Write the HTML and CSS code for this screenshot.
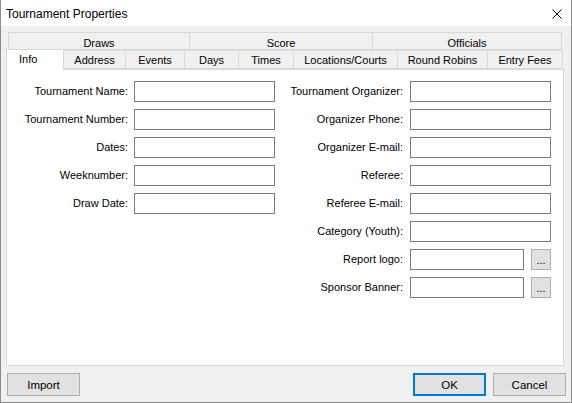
FILE: index.html
```html
<!DOCTYPE html>
<html lang="en">
<head>
  <meta charset="UTF-8" />
  <title>Tournament Properties</title>
  <link rel="stylesheet" href="styles.css">
</head>
<body>
  <div class="dialog">
    <div class="titlebar">
      <span class="title">Tournament Properties</span>
      <svg class="close" width="10" height="10" viewBox="0 0 10 10">
        <path d="M0.5 0.5 L9.5 9.5 M9.5 0.5 L0.5 9.5" stroke="#000" stroke-width="1" fill="none"/>
      </svg>
    </div>

    <div class="tabs">
      <div class="tabrow back">
        <div class="tab" style="width: 182px">Draws</div>
        <div class="tab" style="width: 183px">Score</div>
        <div class="tab" style="width: 189px">Officials</div>
      </div>
      <div class="tabrow front">
        <div class="tab selected" style="width: 58px">Info</div>
        <div class="tab" style="width: 62px">Address</div>
        <div class="tab" style="width: 59px">Events</div>
        <div class="tab" style="width: 54px">Days</div>
        <div class="tab" style="width: 55px">Times</div>
        <div class="tab" style="width: 104px">Locations/Courts</div>
        <div class="tab" style="width: 90px">Round Robins</div>
        <div class="tab" style="width: 75px">Entry Fees</div>
      </div>

      <div class="panel">
        <div class="col left">
          <label>Tournament Name:</label><input type="text">
          <label>Tournament Number:</label><input type="text">
          <label>Dates:</label><input type="text">
          <label>Weeknumber:</label><input type="text">
          <label>Draw Date:</label><input type="text">
        </div>
        <div class="col right">
          <label>Tournament Organizer:</label><input type="text">
          <label>Organizer Phone:</label><input type="text">
          <label>Organizer E-mail:</label><input type="text">
          <label>Referee:</label><input type="text">
          <label>Referee E-mail:</label><input type="text">
          <label>Category (Youth):</label><input type="text">
          <label>Report logo:</label>
          <div class="browse"><input type="text"><button>...</button></div>
          <label>Sponsor Banner:</label>
          <div class="browse"><input type="text"><button>...</button></div>
        </div>
      </div>
    </div>

    <div class="footer">
      <button class="btn">Import</button>
      <span class="spacer"></span>
      <button class="btn default">OK</button>
      <button class="btn">Cancel</button>
    </div>
  </div>
</body>
</html>
```

FILE: styles.css
```css
body {
  margin: 0;
  font-family: "Liberation Sans", Arial, sans-serif;
  font-size: 11px;
  color: #000;
}
.dialog {
  width: 572px;
  height: 403px;
  box-sizing: border-box;
  border: 1px solid #8c8c8c;
  border-top: none;
  background: #f0f0f0;
  display: flex;
  flex-direction: column;
}
.titlebar {
  height: 26px;
  box-sizing: border-box;
  background: #fff;
  display: flex;
  align-items: center;
  padding: 1px 9px 0 5px;
}
.title {
  flex: 1;
  font-size: 12px;
}

/* tab control */
.tabs {
  margin: 6px 7px 0 5px;
}
.tabrow {
  display: flex;
}
.tabrow.back {
  margin-left: 2px;
  height: 17px;
}
.tabrow.front {
  height: 20px;
  align-items: flex-end;
  position: relative;
  z-index: 1;
}
.tab {
  box-sizing: border-box;
  border: 1px solid #d9d9d9;
  border-left: none;
  background: #f0f0f0;
  text-align: center;
}
.tabrow.back .tab:first-child {
  border-left: 1px solid #d9d9d9;
}
.tabrow.back .tab {
  height: 18px;
  line-height: 20px;
}
.tabrow.front .tab {
  height: 19px;
  line-height: 19px;
}
.tab.selected {
  height: 21px !important;
  margin-bottom: -1px;
  background: #fff;
  border-left: 1px solid #d9d9d9;
  border-bottom: none;
  line-height: 18px !important;
  text-align: left;
  padding-left: 12px;
}
.panel {
  height: 297px;
  box-sizing: border-box;
  background: #fff;
  border: 1px solid #d9d9d9;
  display: flex;
  padding: 11px 0 0 0;
}

/* form columns */
.col {
  display: grid;
  align-content: start;
  row-gap: 7px;
}
.col.left {
  grid-template-columns: 121px 141px;
  column-gap: 6px;
}
.col.right {
  margin-left: 8px;
  grid-template-columns: 120px 141px;
  column-gap: 7px;
}
.col label {
  text-align: right;
  line-height: 21px;
  white-space: nowrap;
}
.col input {
  box-sizing: border-box;
  width: 141px;
  height: 21px;
  margin: 0;
  border: 1px solid #7a7a7a;
  padding: 0 3px;
  font: inherit;
  background: #fff;
}
.browse {
  display: flex;
  gap: 7px;
}
.browse input {
  width: 114px;
}
.browse button {
  box-sizing: border-box;
  width: 20px;
  height: 21px;
  padding: 0;
  margin: 0;
  border: 1px solid #adadad;
  background: #e1e1e1;
  font: inherit;
  line-height: 16px;
}

/* footer buttons */
.footer {
  display: flex;
  padding: 7px 5px 0 6px;
  gap: 7px;
}
.spacer {
  flex: 1;
}
.btn {
  box-sizing: border-box;
  width: 73px;
  height: 23px;
  margin: 0;
  border: 1px solid #adadad;
  background: #e1e1e1;
  font: inherit;
  font-size: 11.5px;
  color: #000;
}
.btn.default {
  border: 2px solid #0078d7;
}
```
